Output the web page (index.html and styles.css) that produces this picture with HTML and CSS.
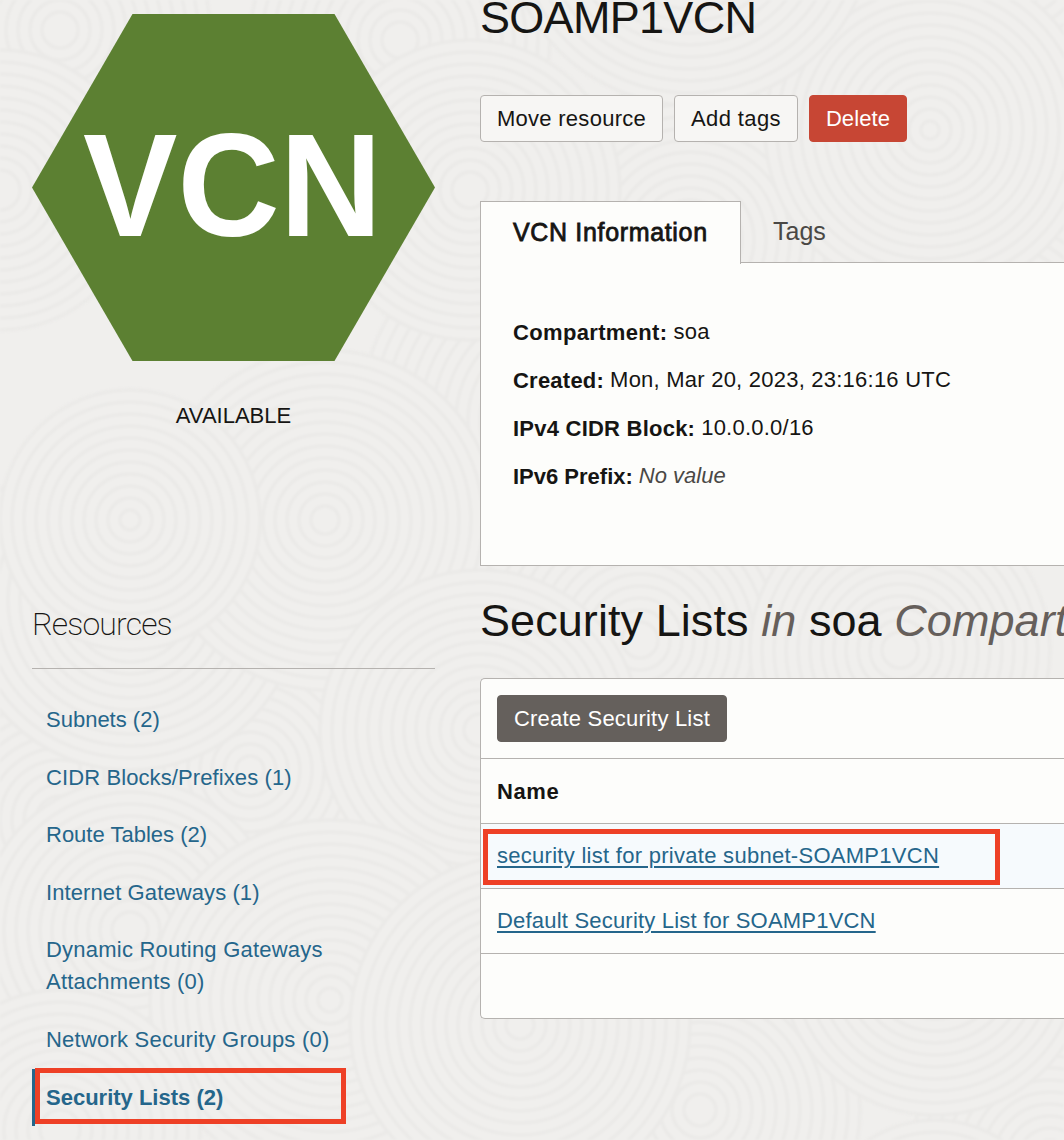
FILE: index.html
```html
<!DOCTYPE html>
<html lang="en">
<head>
<meta charset="utf-8">
<title>SOAMP1VCN</title>
<link rel="stylesheet" href="styles.css">
</head>
<body>
<svg class="texture" aria-hidden="true" width="1064" height="1140"></svg>
<div class="page">
  <aside class="side">
    <svg class="hexagon" viewBox="0 0 403 347" role="img" aria-label="VCN">
      <polygon points="0,173.5 100.5,0 302.5,0 403,173.5 302.5,347 100.5,347"/>
      <text x="51" y="222" textLength="299" lengthAdjust="spacingAndGlyphs">VCN</text>
    </svg>
    <p class="state">AVAILABLE</p>
    <h2 class="side-title">Resources</h2>
    <nav class="links">
      <a class="link" href="#">Subnets (2)</a>
      <a class="link spaced" href="#">CIDR Blocks/Prefixes (1)</a>
      <a class="link" href="#">Route Tables (2)</a>
      <a class="link spaced" href="#">Internet Gateways (1)</a>
      <a class="link wide" href="#">Dynamic Routing Gateways<br>Attachments (0)</a>
      <a class="link wide" href="#">Network Security Groups (0)</a>
      <a class="link link-active" href="#">Security Lists (2)</a>
    </nav>
  </aside>
  <main class="main">
    <h1 class="title">SOAMP1VCN</h1>
    <div class="actions">
      <button class="btn">Move resource</button>
      <button class="btn btn-tags">Add tags</button>
      <button class="btn btn-danger">Delete</button>
    </div>
    <div class="tabs">
      <div class="tab tab-active">VCN Information</div>
      <div class="tab">Tags</div>
    </div>
    <dl class="info">
      <div class="fact fact-first"><dt>Compartment:</dt><dd>soa</dd></div>
      <div class="fact"><dt>Created:</dt><dd>Mon, Mar 20, 2023, 23:16:16 UTC</dd></div>
      <div class="fact"><dt>IPv4 CIDR Block:</dt><dd>10.0.0.0/16</dd></div>
      <div class="fact fact-empty"><dt>IPv6 Prefix:</dt><dd>No value</dd></div>
    </dl>
    <h2 class="title section-title">Security Lists <em>in</em> soa <em>Compartment</em></h2>
    <section class="table">
      <div class="toolbar"><button class="btn btn-dark">Create Security List</button></div>
      <div class="row head">Name</div>
      <div class="row marked"><a href="#">security list for private subnet-SOAMP1VCN</a></div>
      <div class="row"><a href="#">Default Security List for SOAMP1VCN</a></div>
      <div class="row"></div>
    </section>
  </main>
</div>
<script src="texture.js"></script>
</body>
</html>
```
FILE: styles.css
```css
*, *::after { box-sizing: border-box; }

body {
  margin: 0;
  height: 1140px;
  overflow: hidden;
  background: #f0efed;
  color: #161513;
  font: 22px/32px "Liberation Sans", Arial, sans-serif;
}

h1, h2, p, dl, dd { margin: 0; }

.texture {
  position: absolute;
  z-index: -1;
  fill: #f0efed;
  stroke: #ebeae8;
  stroke-width: 3.5;
  filter: blur(1.2px);
}

.page { display: flex; gap: 45px; padding-left: 32px; }

.side { flex: 0 0 403px; padding-top: 14px; }

.hexagon { display: block; width: 403px; height: 347px; }
.hexagon polygon { fill: #5c8032; }
.hexagon text { fill: #fff; font-size: 147px; font-weight: bold; }

.state { margin-top: 39px; text-align: center; }

.side-title {
  height: 84px;
  margin-top: 153px;
  border-bottom: 1px solid #b5b2af;
  padding-top: 21px;
  font: 200 32px/36px Roboto, sans-serif;
  letter-spacing: -.85px;
}

.links { display: flex; flex-direction: column; padding-top: 22px; }

.link {
  padding: 13px 0 12.6px 14px;
  color: #25668b;
  text-decoration: none;
}
.spaced { letter-spacing: .1px; }
.wide { letter-spacing: .22px; }

.link-active {
  position: relative;
  border-left: 3px solid #25668b;
  padding-left: 11px;
  font-weight: bold;
}

.link-active::after, .marked::after {
  content: "";
  position: absolute;
  border: 5px solid #ee4026;
}
.link-active::after { left: 0; top: -1px; width: 311px; height: 56px; }

.main { flex: 1; min-width: 0; }

.title {
  font-size: 45px;
  font-weight: normal;
  line-height: 48px;
  white-space: nowrap;
}
h1.title { height: 95px; line-height: 36px; letter-spacing: -.7px; }
.title em { color: #665f5b; }

.actions { display: flex; gap: 11px; }

.btn {
  height: 47px;
  border: 1px solid #b5b2af;
  border-radius: 4px;
  padding: 0 16px;
  background: #f7f6f4;
  color: #161513;
  font: inherit;
  letter-spacing: .27px;
}
.btn-tags { letter-spacing: .38px; }
.btn-danger { border-color: #c74634; background: #c74634; color: #fff; letter-spacing: .08px; }
.btn-dark { border-color: #65605c; background: #65605c; color: #fff; letter-spacing: .2px; }

.tabs { display: flex; height: 61px; margin-top: 59px; }
.tab { padding: 14px 32px; color: #4a4845; font-size: 25px; }
.tab-active {
  z-index: 1;
  width: 261px;
  height: 63px;
  border: 1px solid #b5b2af;
  border-bottom: 0;
  background: #fdfdfb;
  color: #161513;
  letter-spacing: .66px;
  white-space: nowrap;
  -webkit-text-stroke: .8px #161513;
}

.info {
  height: 304px;
  border: 1px solid #b5b2af;
  border-right: 0;
  padding: 53px 32px 0;
  background: #fdfdfb;
}
.fact { display: flex; gap: 6px; height: 48px; letter-spacing: .23px; }
.fact dt { padding-top: 1px; font-weight: bold; }
.fact-first { letter-spacing: .34px; }
.fact-empty { letter-spacing: 0; }
.fact-empty dd { color: #4a4845; font-style: italic; }

.section-title { overflow: hidden; height: 112px; padding-top: 31px; letter-spacing: .07px; }

.table {
  border: 1px solid #b5b2af;
  border-right: 0;
  border-radius: 5px 0 0 5px;
  background: #fdfdfb;
}
.toolbar { height: 79px; padding: 16px; }
.row { height: 65px; border-top: 1px solid #b5b2af; padding: 16px; letter-spacing: .2px; }
.head { padding-top: 17px; font-weight: bold; letter-spacing: .6px; }
.row a { color: #25668b; text-decoration-thickness: 2px; text-underline-offset: 3px; }
.marked { position: relative; background: #f6fafd; letter-spacing: .28px; }
.marked::after { left: 2px; top: 5px; width: 517px; height: 56px; }
```
FILE: texture.js
```js
// Background of overlapping ripple discs: [x, y, outer radius].
const svg = document.querySelector(".texture");
const ns = "http://www.w3.org/2000/svg";
const discs = [
  [1000, 330, 180], [560, 420, 200], [60, 820, 180], [250, 770, 170],
  [60, 30, 150], [400, 40, 150], [1000, -60, 190], [690, 240, 160],
  [0, 190, 140], [470, 190, 150], [930, 130, 165], [690, -80, 185],
  [640, 640, 150], [900, 650, 150], [130, 600, 170],
  [325, 520, 170], [130, 520, 130], [480, 730, 160], [130, 930, 150], [330, 1000, 180],
  [700, 1110, 160], [1050, 1160, 140], [520, 1025, 170], [60, 1130, 140],
  [935, 960, 155], [935, 1240, 120]
];
for (const [x, y, outer] of discs) {
  for (let r = outer; r > 8; r -= 12) {
    const circle = document.createElementNS(ns, "circle");
    circle.setAttribute("cx", x);
    circle.setAttribute("cy", y);
    circle.setAttribute("r", r);
    svg.append(circle);
  }
}
```
